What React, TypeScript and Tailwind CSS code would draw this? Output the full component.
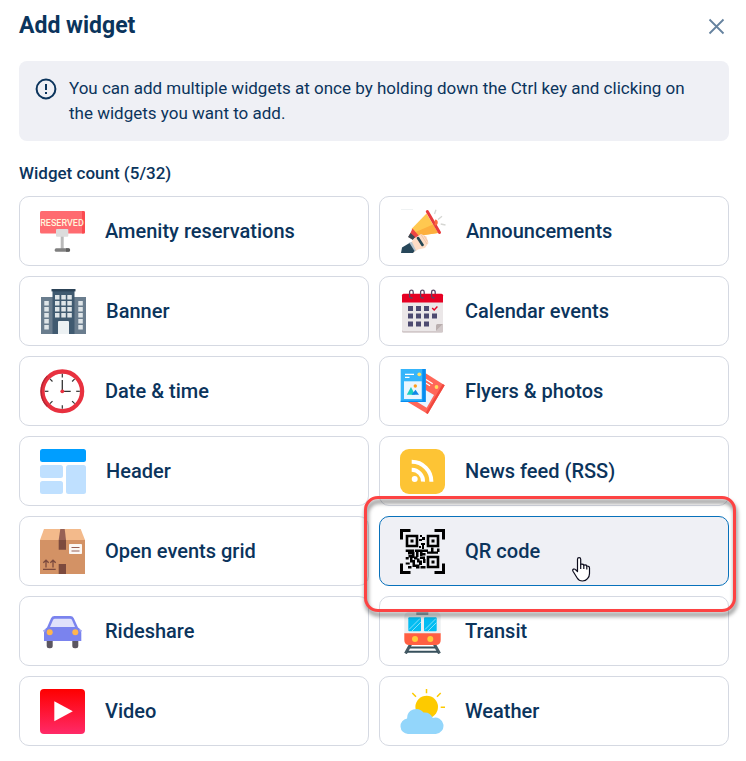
import { useState } from "react";
import type { ReactNode } from "react";

type Widget = {
  id: string;
  label: string;
  icon: ReactNode;
};

type IconProps = {
  width?: number;
  children: ReactNode;
};

const Icon = ({ width = 45, children }: IconProps) => (
  <svg width={width} height={45} viewBox={`0 0 ${width} 45`} fill="none" className="shrink-0" aria-hidden="true">
    {children}
  </svg>
);

const ReservedIcon = () => (
  <Icon>
    <rect y="2" width="45" height="22.5" rx="1.5" fill="#ff6b70" />
    <path d="M42 2h1.5A1.5 1.5 0 0 1 45 3.5V23a1.5 1.5 0 0 1-1.5 1.5H42z" fill="#fb4a50" />
    <text
      x="22"
      y="17"
      fill="#fff3dc"
      fontFamily="Roboto, sans-serif"
      fontSize="9"
      fontWeight="500"
      textAnchor="middle"
    >
      RESERVED
    </text>
    <rect x="20.7" y="27" width="3" height="13" fill="#b9b9b9" />
    <rect x="16" y="20" width="12.3" height="7.7" rx="1" fill="#dcdcdc" />
    <rect x="14.7" y="39.3" width="15.3" height="3.4" rx="1.5" fill="#808080" />
    <path d="M26 39.3h2.500a1.700 1.700 0 0 1 0 3.400H26z" fill="#5f5f5f" />
  </Icon>
);

const BuildingIcon = () => (
  <Icon width={46}>
    <path d="M1 8h12v37H1zM34 8h12v37H34z" fill="#6a7d8e" />
    <path d="M12.5 2h22v43h-22z" fill="#405a70" />
    <path d="M11.5 0h24v2.4h-24z" fill="#2c4357" />
    {[6, 12, 18, 24].map(y => (
      <path key={y} d={`M15 ${y}h4.5v4.5H15zM21.3 ${y}h4.5v4.5h-4.5zM27.3 ${y}h4.5v4.5h-4.5z`} fill="#dfe5e8" />
    ))}
    {[12, 18, 24, 30, 36].map(y => (
      <path key={y} d={`M4.3 ${y}h4.5v4.5H4.3zM38.3 ${y}h4.5v4.5h-4.5z`} fill="#dfe5e8" />
    ))}
    <path d="M18 45V33a1 1 0 0 1 1-1h9a1 1 0 0 1 1 1v12z" fill="#ecf1f3" />
  </Icon>
);

const MegaphoneIcon = () => (
  <Icon width={46}>
    <path d="M1 0h12" stroke="#dfe5e8" />
    <path d="M26.5 4.5 38 24 17.5 27 11.5 20z" fill="#ffc850" />
    <path d="M33 15.5 38 24 17.5 27 14.5 23.5z" fill="#fdaf3e" />
    <path d="M27.3 2.5 39.5 23.5" stroke="#e83b3d" strokeWidth="3" strokeLinecap="round" />
    <path d="M35 10.5a3 3 0 0 1-.5 6z" fill="#fb6d3f" />
    <path d="M12.5 19.5 19 27l-6 3.5L8.5 28z" fill="#ef4444" />
    <path d="M10.5 24 8 28l5 3 2-3z" fill="#3b4a55" />
    <path d="M14 29.5 21 25l5.5 2.500 2 6.500-3.500 5-7 1.500-5 3.500-4.500-7z" fill="#fddcc5" />
    <path d="M21 25.5 27 35M24 26.5l3.5 6" stroke="#efbfa2" strokeWidth=".8" />
    <path d="M18 29l4.5 7" stroke="#264653" strokeWidth="2.6" strokeLinecap="round" />
    <path d="M9 33.5 12 33l4 8.5-2.5 1.5z" fill="#b7c5cf" />
    <path d="M1 44l1-5.5L9.5 34l5 8-1.5 2z" fill="#27475a" />
    <path d="M34.5 5 36 .8M38 10.5 42 7.200M40.700 15l4.800 1" stroke="#d6d7d3" strokeWidth="1.3" />
  </Icon>
);

const CalendarIcon = () => (
  <Icon>
    <rect x="2" y="6" width="41" height="37.7" rx="1.5" fill="#d2c9ca" />
    <path d="M2 12h41v23l-7 7H3.5A1.5 1.5 0 0 1 2 40.5z" fill="#ebe7e8" />
    <path d="M2 13.4V6.2a1.5 1.5 0 0 1 1.5-1.5h38A1.5 1.5 0 0 1 43 6.200v7.200z" fill="#e60023" />
    <path d="M36 42v-5.5a1.5 1.5 0 0 1 1.5-1.500H43z" fill="#b9aeae" />
    {[11, 22, 33].map(x => (
      <path
        key={x}
        d={`M${x + 1.5} 8.3a1.6 1.6 0 0 1-2.9-.8V3a1.8 1.8 0 0 1 3.6 0v2`}
        stroke="#5a4664"
        strokeWidth="1.3"
      />
    ))}
    {[17, 24.5, 32.5].map(y => (
      <path key={y} d={`M8 ${y}h5v5H8zM16 ${y}h5v5h-5zM24 ${y}h5v5h-5z`} fill="#4d4a70" />
    ))}
    <path d="M32 24.5h5v5h-5z" fill="#4d4a70" />
    <path d="m32.2 19 2 2 3.2-3.5" stroke="#e60023" strokeWidth="1.4" />
  </Icon>
);

const ClockIcon = () => (
  <Icon>
    <circle cx="22.3" cy="22.3" r="19.8" fill="#fff" stroke="#e8313f" strokeWidth="4.3" />
    <path d="M6.8 37.8a22 22 0 0 1 0-31l1 1a20.5 20.5 0 0 0 0 29z" fill="#b32735" />
    {[0, 45, 90, 135, 180, 225, 270, 315].map(angle => (
      <path key={angle} d="M22.3 4.8v3.6" stroke="#333" strokeWidth="1.2" transform={`rotate(${angle} 22.3 22.3)`} />
    ))}
    <path d="M22.3 11v11.3h8.4" stroke="#333" strokeWidth="1.3" />
    <circle cx="22.3" cy="22.3" r="1.9" fill="#e8313f" />
  </Icon>
);

const FlyersIcon = () => (
  <Icon>
    <path d="M25.6 4.3 44.7 16.3 27.7 45 7.3 32.7z" fill="#ff6759" />
    <path d="M42.7 15 44.7 16.3 27.7 45l-2-1.2z" fill="#f0473e" />
    <path d="M25.6 21 34 26l-7.3 12.700L14 31z" fill="#eaf6ff" />
    <path d="M25.5 10.3l7.2 4.5M25.5 14l4.5 2.8" stroke="#fff" strokeWidth="1.2" />
    <circle cx="36.5" cy="18" r="1.9" fill="#ffdb5c" />
    <path d="M.7 0h25v33H.7z" fill="#35b5fb" />
    <path d="M22.3 0h3.400v33H.7v-1.200h21.600z" fill="#078cf0" />
    <path d="M4 12.3h17.7V30H4z" fill="#eaf6ff" />
    <path d="M6.8 25.8 11 18l4 7.8z" fill="#1bcfc0" />
    <path d="m11.5 25.8 4-5 3.5 5z" fill="#1186e8" />
    <circle cx="15.3" cy="17" r="1.7" fill="#ff9d1c" />
    <path d="M5 5.3h9M5 8.3h4.5" stroke="#fff" strokeWidth="1.2" />
    <circle cx="19.3" cy="5.3" r="1.9" fill="#ffe066" />
  </Icon>
);

const HeaderIcon = () => (
  <Icon width={46}>
    <rect width="46" height="13" rx="2.5" fill="#009eff" />
    <rect y="16" width="23" height="13" rx="2.5" fill="#bfe0ff" />
    <rect y="32" width="23" height="13" rx="2.5" fill="#bfe0ff" />
    <rect x="26" y="16" width="20" height="29" rx="2.5" fill="#bfe0ff" />
  </Icon>
);

const RssIcon = () => (
  <Icon>
    <rect width="45" height="45" rx="9" fill="#fdc435" />
    <circle cx="14.7" cy="30" r="3" fill="#fff" />
    <path d="M11.7 12.8a19.7 19.7 0 0 1 19.7 19.9M11.7 20.7a11.5 11.5 0 0 1 11.3 12" stroke="#fff" strokeWidth="4" />
  </Icon>
);

const BoxIcon = () => (
  <Icon>
    <path d="M0 11h45v34H0z" fill="#d39265" />
    <path d="M4 0h36.700L45 11H0z" fill="#f3ba8b" />
    <path d="M20.3 0h4.400L26 11h-7.300z" fill="#976155" />
    <path d="M18.7 11H26v9.700h-7.300zM18.700 35H26v10h-7.300z" fill="#7c4a3e" />
    <rect x="29" y="15" width="13" height="10" rx=".8" fill="#fbf7f4" />
    <path d="M31.5 18.5h8M31.5 22h8" stroke="#976155" strokeWidth="1.2" />
    <path
      d="M3 40.4h12.7M6 38.5v-7M13 38.5v-7M3.3 33.8 6 31.2l2.7 2.6M10.3 33.8l2.7-2.6 2.7 2.6"
      stroke="#7c4a3e"
      strokeWidth="1.3"
    />
  </Icon>
);

const QrIcon = () => (
  <Icon>
    <path d="M0 0h10.500v3H3v7.500H0zM34.500 0H45v10.500h-3V3h-7.500zM0 34.500h3V42h7.500v3H0zM42 34.500h3V45H34.500v-3H42z" fill="#000" />
    <path d="M7 7h10v10H7zM28 7h10v10H28zM28 28h10v10H28z" stroke="#000" strokeWidth="2.6" />
    <path d="M10.5 10.5h3v3h-3zM31.5 10.5h3v3h-3zM31.500 31.500h3v3h-3z" fill="#000" />
    <path
      d="M20 6h2v2h-2zM22 8h3v3h-3zM19 10h3v2h-3zM21 14h4v2h-4zM22 16h2v4h-2zM19 17h2v2h-2zM5.700 20.500h8.500v2.500H5.700zM15 20.500h13v2.500H15zM27 22.500h11v2.300H27zM31 18.500h2.500v5H31zM37 19.500h2.500v3.500H37zM8 23h5v2.500H8zM12 23h2.500v6H12zM16 23h2.500v5H16zM20 22h2.500v5H20zM22 24h3.500v2.500H22zM5.700 28h3v2.500h-3zM8.500 26h3.500v2.500H8.500zM10 28.500h2.500v5H10zM14 27.500h3.500v3H14zM12.500 31h2.500v6h-2.500zM17 29.500h2.500v4H17zM19 31.500h3V36h-3zM20 27.500h5v2.500h-5zM23 30h2.500v4H23zM5.700 33.500h4v2h-4zM8 37h3.500v2.500H8zM12.500 35.500h7v4h-3.500v-1.500h-3.500zM20.500 37h5v2.500h-5z"
      fill="#000"
    />
  </Icon>
);

const CarIcon = () => (
  <Icon>
    <rect x="6.7" y="29" width="6" height="10.3" rx="2.5" fill="#5b5661" />
    <rect x="32.3" y="29" width="6" height="10.3" rx="2.5" fill="#5b5661" />
    <path
      d="M7 18.5 11 9.3Q12 7 14.5 7h15.800q2.500 0 3.500 2.300L38 18.500q3.300 2 3.300 5.500v8H4v-8q0-3.500 3-5.500z"
      fill="#7a83ee"
    />
    <path d="M10 18 13 11q.5-1.3 2-1.3h15q1.500 0 2 1.300l3 7z" fill="#e0e1fb" />
    <path d="M3 21.5 5.5 20v2.500H3zM42 21.500 39.500 20v2.500H42z" fill="#a1a7f3" />
    <circle cx="9.7" cy="23.3" r="3" fill="#ffb54d" />
    <circle cx="35.3" cy="23.3" r="3" fill="#ffb54d" />
  </Icon>
);

const TrainIcon = () => (
  <Icon>
    <path d="M10.5 35.5 5.5 44.5M34.5 35.5l5 9" stroke="#455a64" strokeWidth="3" />
    <path d="M10 38.5h25M7 42.8h31" stroke="#37505c" strokeWidth="2" />
    <path d="M4.3 25V8q0-5 5-5h26.400q5 0 5 5v17z" fill="#eceff1" />
    <path d="M16.3 3.3h12V6h-12z" fill="#90a4ae" />
    <rect x="8.3" y="8.3" width="12.7" height="14" rx="1" fill="#03bdf2" />
    <rect x="24" y="8.3" width="12.7" height="14" rx="1" fill="#03bdf2" />
    <path d="M9 20.5 20 9.5M12 22 21 13M25 20.5l11-11M28 22l8.500-8.500" stroke="#7fe0fa" />
    <path d="M4.3 24.3h36.400V31q0 5-5 5H9.300q-5 0-5-5z" fill="#ff5f42" />
    <circle cx="15" cy="30" r="3" fill="#ffca3a" />
    <circle cx="30.3" cy="30" r="3" fill="#ffca3a" />
  </Icon>
);

const VideoIcon = () => (
  <Icon>
    <defs>
      <linearGradient id="video-fill" x1="0" y1="0" x2="0" y2="1">
        <stop stopColor="#fe0000" />
        <stop offset="1" stopColor="#ff2a68" />
      </linearGradient>
    </defs>
    <rect width="45" height="45" rx="4" fill="url(#video-fill)" />
    <path d="M14.3 12.3v20l18.500-10z" fill="#fff" />
  </Icon>
);

const WeatherIcon = () => (
  <Icon>
    <circle cx="26.7" cy="18" r="11.3" fill="#fdca00" />
    <path d="M26.5 0v4.3M12.3 4 16 7.7M40.7 4 37 7.7M40.7 18.3H45" stroke="#fdca00" strokeWidth="1.5" />
    <path
      d="M8 45a7.8 7.8 0 0 1-.9-15.5A9.200 9.200 0 0 1 23.500 23.500a9 9 0 0 1 9.300 5.500 8.200 8.200 0 1 1 3 16z"
      fill="#93d6fb"
    />
  </Icon>
);

const HandCursor = () => (
  <svg width="19" height="25" viewBox="0 0 19 25" className="pointer-events-none absolute top-[41px] left-[193px]" aria-hidden="true">
    <path
      d="M5.500 14.500V2.200a1.600 1.600 0 0 1 3.200 0v5q2.800-.4 3.100.9 2.500-.5 3 .9 2.700-.2 2.700 2v5.500q0 3-2 5.200-1.800 2.300-5 2.300-3.600 0-5.300-3L1 14.200q-.8-1.500.5-2.100 1.200-.4 2.200.7z"
      fill="#fff"
      stroke="#0b0b1c"
      strokeWidth="1.2"
      strokeLinejoin="round"
    />
    <path d="M8.700 7v5M11.800 8v4M14.800 9v3.500" stroke="#0b0b1c" strokeWidth="1.2" />
  </svg>
);

const WIDGETS: Widget[] = [
  { id: "amenity", label: "Amenity reservations", icon: <ReservedIcon /> },
  { id: "announcements", label: "Announcements", icon: <MegaphoneIcon /> },
  { id: "banner", label: "Banner", icon: <BuildingIcon /> },
  { id: "calendar", label: "Calendar events", icon: <CalendarIcon /> },
  { id: "datetime", label: "Date & time", icon: <ClockIcon /> },
  { id: "flyers", label: "Flyers & photos", icon: <FlyersIcon /> },
  { id: "header", label: "Header", icon: <HeaderIcon /> },
  { id: "rss", label: "News feed (RSS)", icon: <RssIcon /> },
  { id: "open-events", label: "Open events grid", icon: <BoxIcon /> },
  { id: "qr", label: "QR code", icon: <QrIcon /> },
  { id: "rideshare", label: "Rideshare", icon: <CarIcon /> },
  { id: "transit", label: "Transit", icon: <TrainIcon /> },
  { id: "video", label: "Video", icon: <VideoIcon /> },
  { id: "weather", label: "Weather", icon: <WeatherIcon /> },
];

export default function App() {
  const [selected, setSelected] = useState("qr");

  return (
    <main className="bg-white pt-[11px] pr-[17px] pb-[15px] pl-[19px] font-['Roboto',sans-serif] text-[#0b345c]">
      <header className="flex h-[30px] items-center justify-between">
        <h1 className="text-[23px] leading-[30px] font-bold">Add widget</h1>
        <button type="button" aria-label="Close" className="p-1 text-[#66839f]">
          <svg width="17" height="17" viewBox="0 0 17 17" fill="none" stroke="currentColor" strokeWidth="1.8">
            <path d="M1.500 1.500l14 14M15.500 1.500l-14 14" />
          </svg>
        </button>
      </header>

      <div className="mt-5 flex gap-3 rounded-lg bg-[#eff0f5] py-[15px] pr-5 pl-4">
        <svg width="22" height="22" viewBox="0 0 22 22" fill="none" stroke="currentColor" className="mt-0.5 shrink-0" aria-hidden="true">
          <circle cx="11" cy="11" r="9.4" strokeWidth="2" />
          <path d="M11 6v6M11 14v2" strokeWidth="2" />
        </svg>
        <p className="text-[17px] leading-[25px]">
          You can add multiple widgets at once by holding down the Ctrl key and clicking on the widgets you want to add.
        </p>
      </div>

      <h2 className="mt-5 text-[17px] leading-[25px] font-medium">Widget count (5/32)</h2>

      <div className="mt-[10px] grid grid-cols-2 gap-[10px]">
        {WIDGETS.map(widget => {
          const active = widget.id === selected;
          return (
            <div key={widget.id} className="relative">
              <button
                type="button"
                aria-pressed={active}
                onClick={() => setSelected(widget.id)}
                className={
                  active
                    ? "flex h-[70px] w-full items-center gap-5 rounded-[10px] border border-[#0871bb] bg-[#eff0f5] px-5 text-left text-[20px] font-medium"
                    : "flex h-[70px] w-full items-center gap-5 rounded-[10px] border border-[#d5d9e2] bg-white px-5 text-left text-[20px] font-medium"
                }
              >
                {widget.icon}
                {widget.label}
              </button>
              {active ? (
                <>
                  <div className="pointer-events-none absolute -top-5 -right-[7px] -bottom-[26px] -left-[15px] z-10 rounded-[14px] border-3 border-[#fd4343] drop-shadow-[1px_4px_2px_rgba(0,0,0,0.55)]" />
                  <HandCursor />
                </>
              ) : null}
            </div>
          );
        })}
      </div>
    </main>
  );
}
